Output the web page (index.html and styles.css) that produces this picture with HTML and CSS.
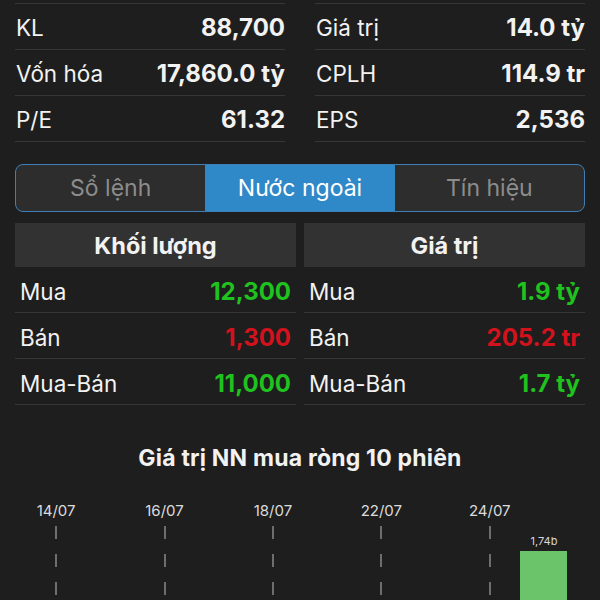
FILE: index.html
```html
<!DOCTYPE html>
<html lang="vi">
<head>
    <meta charset="UTF-8">
    <meta name="viewport" content="width=device-width, initial-scale=1.0">
    <title>Nước ngoài</title>
    <link rel="stylesheet" href="styles.css">
</head>
<body>

<div class="container">
    <div class="stats">
        <div class="stats-col">
            <div class="stat-row"><span class="label">KL</span><span class="value">88,700</span></div>
            <div class="stat-row"><span class="label">Vốn hóa</span><span class="value">17,860.0 tỷ</span></div>
            <div class="stat-row"><span class="label">P/E</span><span class="value">61.32</span></div>
        </div>
        <div class="stats-col">
            <div class="stat-row"><span class="label">Giá trị</span><span class="value">14.0 tỷ</span></div>
            <div class="stat-row"><span class="label">CPLH</span><span class="value">114.9 tr</span></div>
            <div class="stat-row"><span class="label">EPS</span><span class="value">2,536</span></div>
        </div>
    </div>

    <div class="segmented">
        <div class="segment">Sổ lệnh</div>
        <div class="segment active">Nước ngoài</div>
        <div class="segment">Tín hiệu</div>
    </div>

    <div class="foreign">
        <div class="foreign-col">
            <div class="col-head">Khối lượng</div>
            <div class="trade-row"><span class="label">Mua</span><span class="value up">12,300</span></div>
            <div class="trade-row"><span class="label">Bán</span><span class="value down">1,300</span></div>
            <div class="trade-row"><span class="label">Mua-Bán</span><span class="value up">11,000</span></div>
        </div>
        <div class="foreign-col">
            <div class="col-head">Giá trị</div>
            <div class="trade-row"><span class="label">Mua</span><span class="value up">1.9 tỷ</span></div>
            <div class="trade-row"><span class="label">Bán</span><span class="value down">205.2 tr</span></div>
            <div class="trade-row"><span class="label">Mua-Bán</span><span class="value up">1.7 tỷ</span></div>
        </div>
    </div>

    <h2 class="chart-title">Giá trị NN mua ròng 10 phiên</h2>

    <div class="chart">
        <div class="day"><span class="date">14/07</span><span class="grid-line"></span></div>
        <div class="day"></div>
        <div class="day"><span class="date">16/07</span><span class="grid-line"></span></div>
        <div class="day"></div>
        <div class="day"><span class="date">18/07</span><span class="grid-line"></span></div>
        <div class="day"></div>
        <div class="day"><span class="date">22/07</span><span class="grid-line"></span></div>
        <div class="day"></div>
        <div class="day"><span class="date">24/07</span><span class="grid-line"></span></div>
        <div class="day bar-day">
            <span class="bar-label">1,74b</span>
            <span class="bar"></span>
        </div>
    </div>
</div>

</body>
</html>
```

FILE: styles.css
```css
body {
    margin: 0;
    height: 600px;
    overflow: hidden;
    background: #1e1e1e;
    color: #f2f2f2;
    font-family: Inter, "Noto Sans", sans-serif;
}

.container {
    padding: 3px 15px 0;
}

.stats {
    display: grid;
    grid-template-columns: 1fr 1fr;
    column-gap: 30px;
}

.stats-col {
    border-top: 1px solid #363636;
}

.stat-row {
    display: flex;
    justify-content: space-between;
    align-items: center;
    height: 46px;
    padding-top: 2px;
    box-sizing: border-box;
    border-bottom: 1px solid #363636;
    font-size: 22.5px;
}

.stat-row .label {
    padding-left: 1px;
}

.value {
    font-weight: 700;
    font-size: 24px;
}

.segmented {
    display: flex;
    margin-top: 22px;
    height: 46px;
    border: 1px solid #3d7fb5;
    border-radius: 8px;
    overflow: hidden;
    background: #2d2d2d;
}

.segment {
    flex: 1;
    display: flex;
    align-items: center;
    justify-content: center;
    font-size: 23px;
    color: #8c8c8c;
}

.segment.active {
    background: #2f88c8;
    color: #ffffff;
}

.foreign {
    display: grid;
    grid-template-columns: 1fr 1fr;
    column-gap: 8px;
    margin-top: 11px;
}

.col-head {
    height: 44px;
    display: flex;
    align-items: center;
    justify-content: center;
    background: #323232;
    font-size: 23.5px;
    font-weight: 700;
}

.trade-row {
    display: flex;
    justify-content: space-between;
    align-items: center;
    height: 46px;
    padding: 4px 5px 0;
    box-sizing: border-box;
    border-bottom: 1px solid #363636;
    font-size: 22.5px;
}

.up {
    color: #1fc21f;
}

.down {
    color: #d2121c;
}

.chart-title {
    margin: 40px 0 0;
    text-align: center;
    font-size: 23px;
    line-height: 26px;
    font-weight: 700;
    letter-spacing: 0.2px;
}

.chart {
    display: flex;
    margin: 31px 14px 0;
    height: 120px;
}

.day {
    flex: 1;
    display: flex;
    flex-direction: column;
    align-items: center;
}

.date {
    font-size: 15px;
    line-height: 18px;
    color: #dcdcdc;
}

.grid-line {
    margin-top: 6px;
    width: 2px;
    flex: 1;
    background: repeating-linear-gradient(to bottom, #6e6e6e 0 13px, transparent 13px 28px);
}

.bar-day {
    padding-top: 32px;
}

.bar-label {
    font-size: 11px;
    line-height: 14px;
    color: #d8d8d8;
}

.bar {
    margin-top: 3px;
    width: 47px;
    flex: 1;
    background: #6cc46a;
}
```
